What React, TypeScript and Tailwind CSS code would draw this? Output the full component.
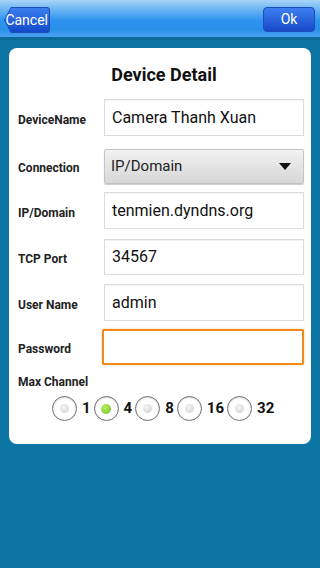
import React from "react";

const font = { fontFamily: "Roboto, 'Noto Sans', 'Liberation Sans', sans-serif" };

function Field({ label, value, h = "h-[37px]", mt }: { label: string; value: string; h?: string; mt: string }) {
  return (
    <div className={`flex items-center ${mt}`}>
      <div className="w-[86px] pt-[4px] text-[12px] font-bold text-[#222]">{label}</div>
      <div className={`w-[200px] ${h} border border-[#dcdcdc] bg-white shadow-[inset_0_1px_1px_rgba(0,0,0,0.06)] flex items-center pl-[7px] text-[16px] text-[#111]`}>
        {value}
      </div>
    </div>
  );
}

function Radio({ label, checked }: { label: string; checked?: boolean }) {
  return (
    <div className="flex items-center">
      <div className="w-[25px] h-[25px] rounded-full border border-[#6f6f6f] bg-white flex items-center justify-center shadow-[inset_0_1px_2px_rgba(0,0,0,0.15)]">
        {checked ? (
          <div className="w-[10px] h-[10px] rounded-full bg-[radial-gradient(circle_at_40%_35%,#b8f060,#6cc020)]" />
        ) : (
          <div className="w-[9px] h-[9px] rounded-full bg-[radial-gradient(circle_at_40%_35%,#f4f4f4,#cfcfcf)]" />
        )}
      </div>
      <span className="ml-[5px] text-[15px] font-bold text-[#111]">{label}</span>
    </div>
  );
}

export default function App() {
  return (
    <div className="w-[320px] h-[568px] bg-[#0d75a3] flex flex-col overflow-hidden" style={font}>
      <div className="h-[37px] bg-[linear-gradient(#a6d4f7_0%,#6db6f4_25%,#2e93ee_55%,#2b8fea_80%,#4aa2ee_100%)] flex items-center justify-between pl-[4px] pr-[5px] shrink-0">
        <div className="relative h-[26px] w-[46px] mt-[3px]">
          <svg className="absolute inset-0" width="46" height="26" viewBox="0 0 46 26">
            <defs>
              <linearGradient id="cg" x1="0" y1="0" x2="0" y2="1">
                <stop offset="0" stopColor="#3b7ff0" />
                <stop offset="1" stopColor="#1348c8" />
              </linearGradient>
            </defs>
            <path d="M7 0.5 H43 Q45.5 0.5 45.5 3 V23 Q45.5 25.5 43 25.5 H7 L0.5 13 Z" fill="url(#cg)" stroke="#1a4fb8" strokeWidth="1" />
          </svg>
          <span className="absolute inset-0 flex items-center justify-end pr-[2px] text-[14px] text-white">Cancel</span>
        </div>
        <div className="h-[25px] w-[52px] mt-[2px] rounded-[4px] bg-[linear-gradient(#3d7ef0,#1749c9)] border border-[#1a4fb8] flex items-center justify-center text-[14px] text-white">
          Ok
        </div>
      </div>
      <div className="h-[3px] bg-[#0b6b98] shrink-0" />
      <div className="mx-[9px] mt-[8px] h-[396px] bg-white rounded-[8px] pl-[9px] pr-[7px] flex flex-col">
        <div className="pt-[15px] text-center text-[18px] leading-[24px] font-bold text-[#111] pl-[6px]">Device Detail</div>
        <Field label="DeviceName" value="Camera Thanh Xuan" mt="mt-[12px]" />
        <div className="flex items-center mt-[13px]">
          <div className="w-[86px] pt-[3px] text-[12px] font-bold text-[#222]">Connection</div>
          <div className="w-[200px] h-[35px] rounded-[2px] border border-[#c4c4c4] bg-[linear-gradient(#f2f2f2,#d6d6d6)] shadow-[0_1px_1px_rgba(0,0,0,0.2)] flex items-center justify-between pl-[6px] pr-[12px] text-[15px] text-[#222]">
            <span>IP/Domain</span>
            <svg width="12" height="7" viewBox="0 0 12 7"><path d="M0 0 H12 L6 7 Z" fill="#111" /></svg>
          </div>
        </div>
        <Field label="IP/Domain" value="tenmien.dyndns.org" mt="mt-[8px]" />
        <Field label="TCP Port" value="34567" mt="mt-[10px]" h="h-[36px]" />
        <Field label="User Name" value="admin" mt="mt-[9px]" />
        <div className="flex items-center mt-[8px]">
          <div className="w-[85px] pt-[3px] text-[12px] font-bold text-[#222]">Password</div>
          <div className="w-[203px] h-[36px] rounded-[2px] border-2 border-[#f08a1c] bg-white shadow-[0_0_2px_rgba(240,138,28,0.6)]" />
        </div>
        <div className="mt-[9px] text-[12px] font-bold text-[#222] leading-[16px]">Max Channel</div>
        <div className="mt-[6px] flex items-center gap-[3px] pl-[34px]">
          <Radio label="1" />
          <Radio label="4" checked />
          <Radio label="8" />
          <Radio label="16" />
          <Radio label="32" />
        </div>
      </div>
    </div>
  );
}
